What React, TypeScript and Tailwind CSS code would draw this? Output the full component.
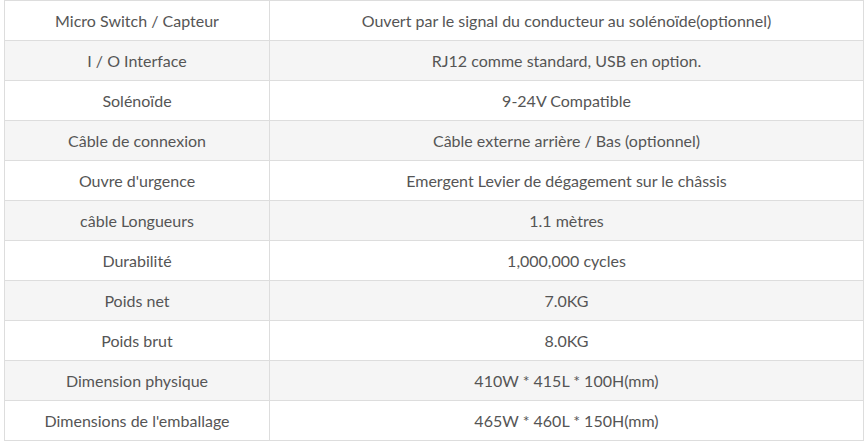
import React from "react";

const rows: [string, string][] = [
  ["Micro Switch / Capteur", "Ouvert par le signal du conducteur au solénoïde(optionnel)"],
  ["I / O Interface", "RJ12 comme standard, USB en option."],
  ["Solénoïde", "9-24V Compatible"],
  ["Câble de connexion", "Câble externe arrière / Bas (optionnel)"],
  ["Ouvre d'urgence", "Emergent Levier de dégagement sur le châssis"],
  ["câble Longueurs", "1.1 mètres"],
  ["Durabilité", "1,000,000 cycles"],
  ["Poids net", "7.0KG"],
  ["Poids brut", "8.0KG"],
  ["Dimension physique", "410W * 415L * 100H(mm)"],
  ["Dimensions de l'emballage", "465W * 460L * 150H(mm)"],
];

export default function App() {
  return (
    <div className="w-[867px] h-[444px] bg-white pl-[4px] pt-[0px]" style={{ fontFamily: "Lato, 'Open Sans', sans-serif" }}>
      <table className="border-collapse w-[860px] text-[16px] text-[#555]">
        <tbody>
          {rows.map(([a, b], i) => (
            <tr key={i} className={i % 2 === 1 ? "bg-[#f5f5f5]" : "bg-white"}>
              <td className="border border-[#ddd] h-[40px] w-[265px] text-center p-0 pt-[1px] leading-none">{a}</td>
              <td className="border border-[#ddd] h-[40px] text-center p-0 pt-[1px] leading-none">{b}</td>
            </tr>
          ))}
        </tbody>
      </table>
    </div>
  );
}
